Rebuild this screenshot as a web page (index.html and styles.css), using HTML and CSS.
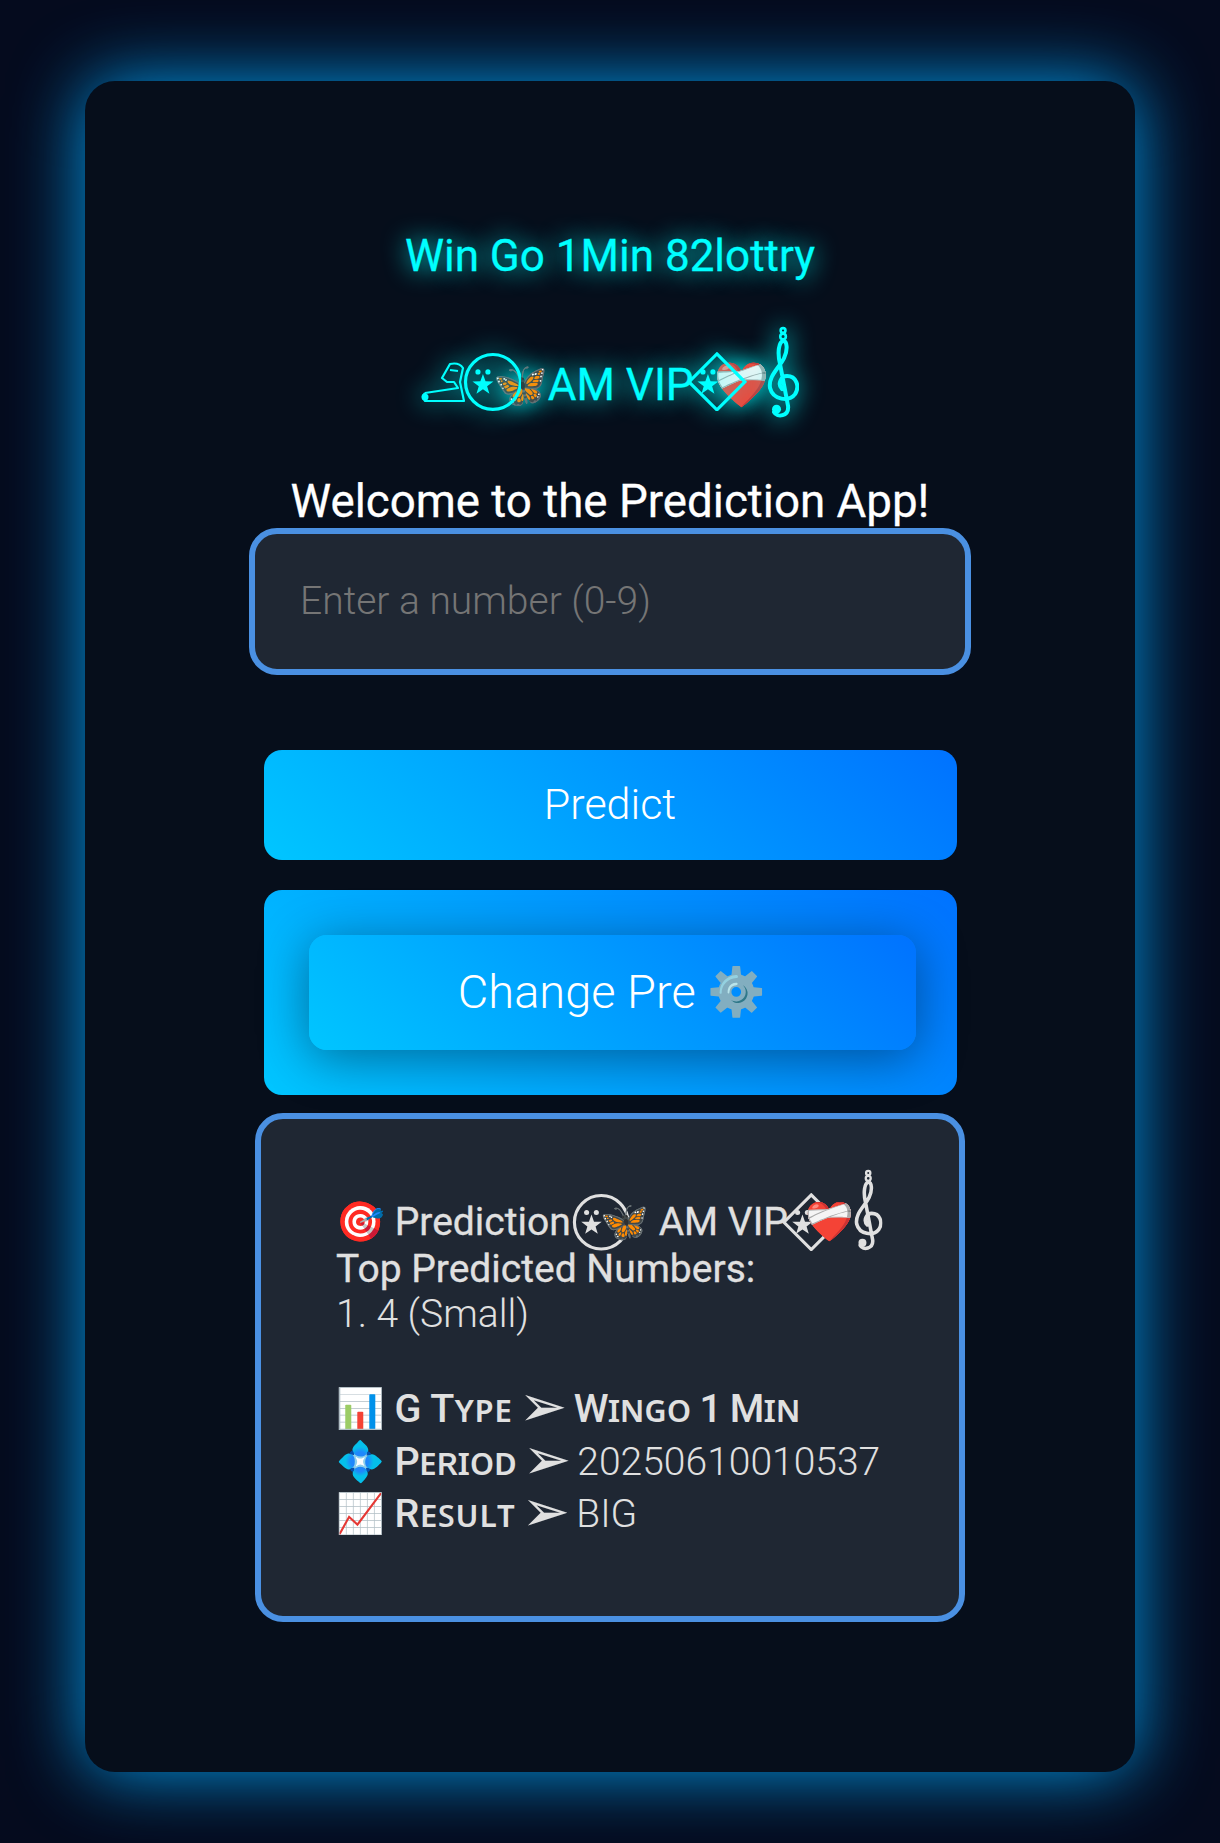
FILE: index.html
```html
<!DOCTYPE html>
<html>
<head>
  <title>Win Go Prediction</title>
  <link rel="stylesheet" href="styles.css">
</head>
<body>
  <svg class="defs" xmlns="http://www.w3.org/2000/svg">
    <symbol id="star-dots" viewBox="0 0 60 60">
      <polygon fill="currentColor" points="21,22 23.6,29.4 31.5,29.6 25.2,34.4 27.5,41.9 21,37.4 14.5,41.9 16.8,34.4 10.5,29.6 18.4,29.4"/>
      <circle fill="currentColor" cx="16" cy="20" r="2.6"/>
      <circle fill="currentColor" cx="26" cy="20" r="2.6"/>
    </symbol>
    <symbol id="clef" viewBox="0 0 32 94">
      <g fill="none" stroke="currentColor" stroke-width="4" stroke-linecap="round">
        <circle cx="16" cy="4.5" r="2.4" stroke-width="2.6"/>
        <circle cx="16" cy="10.5" r="2.8" stroke-width="2.6"/>
        <path d="M15 63C10 58 14 50 20 50C29 50 33 60 28 68C22 76 6 74 3 62C1 50 12 42 17 32C21 24 20 14 16 15C12 16 10 26 13 38L21 80C22 90 10 92 7 86"/>
      </g>
      <circle fill="currentColor" cx="9.5" cy="83" r="4.5"/>
    </symbol>
  </svg>

  <div class="card">
    <h1 class="title">Win Go 1Min 82lottry</h1>
    <h2 class="brand"><svg class="sphinx" viewBox="0 0 44 44"><path d="M4 32L37 27L33 21L26 21L21 17L29 3Q38 1 42 7L39 21L43 40L4 40Q0 36 4 32M29 9L37 10" fill="none" stroke="currentColor" stroke-width="2.2" stroke-linejoin="round"/><circle cx="4" cy="36" r="3.5" fill="currentColor"/></svg><svg class="ring" viewBox="0 0 60 60"><circle cx="31" cy="30" r="27.5" fill="none" stroke="currentColor" stroke-width="3.2"/><use href="#star-dots" width="60" height="60"/></svg>🦋AM VIP<svg class="gem" viewBox="0 0 60 60"><polygon points="30,2 58,30 30,58 2,30" fill="none" stroke="currentColor" stroke-width="3.2"/><use href="#star-dots" width="60" height="60"/></svg>❤️‍🩹<svg class="clef"><use href="#clef"/></svg></h2>
    <h3 class="welcome">Welcome to the Prediction App!</h3>
    <input type="text" class="number-input" placeholder="Enter a number (0-9)" />
    <button class="btn predict-btn">Predict</button>
    <div class="change-wrap">
      <button class="btn change-btn">Change Pre ⚙️</button>
    </div>
    <div class="result">
      <p class="result-head">🎯 Prediction<svg class="ring" viewBox="0 0 60 60"><circle cx="31" cy="30" r="27.5" fill="none" stroke="currentColor" stroke-width="3.2"/><use href="#star-dots" width="60" height="60"/></svg>🦋 AM VIP<svg class="gem" viewBox="0 0 60 60"><polygon points="30,2 58,30 30,58 2,30" fill="none" stroke="currentColor" stroke-width="3.2"/><use href="#star-dots" width="60" height="60"/></svg>❤️‍🩹<svg class="clef"><use href="#clef"/></svg></p>
      <p class="result-sub">Top Predicted Numbers:</p>
      <p class="result-num">1. 4 (Small)</p>
      <div class="meta">
        <p>📊 <b>G Tʏᴘᴇ <span class="arrow">➢</span> <span class="value">Wɪɴɢᴏ 1 Mɪɴ</span></b></p>
        <p>💠 <b><span class="period">Pᴇʀɪᴏᴅ</span> <span class="arrow">➢</span></b> 20250610010537</p>
        <p>📈 <b>Rᴇꜱᴜʟᴛ <span class="arrow">➢</span></b> BIG</p>
      </div>
    </div>
  </div>
</body>
</html>
```

FILE: styles.css
```css
html, body {
  margin: 0;
  padding: 0;
}
body {
  width: 1220px;
  height: 1843px;
  box-sizing: border-box;
  padding: 81px 85px 71px;
  background: #050b1e;
  font-family: Roboto, "Noto Sans", "DejaVu Sans", sans-serif;
  overflow: hidden;
}
.defs {
  display: none;
}
.card {
  height: 1691px;
  box-sizing: border-box;
  padding-top: 150px;
  background: #060e1b;
  border-radius: 30px;
  box-shadow: 0 0 72px rgba(0, 170, 255, 0.9);
  display: flex;
  flex-direction: column;
  align-items: center;
}
.title {
  margin: 0;
  font-size: 44px;
  font-weight: 400;
  -webkit-text-stroke: 0.3px;
  line-height: 51px;
  color: #00ffff;
  text-shadow: 0 0 25px #00ffff;
}
.brand {
  margin: 44px 0 0;
  font-size: 44px;
  font-weight: 400;
  -webkit-text-stroke: 0.3px;
  line-height: 100px;
  white-space: nowrap;
  color: #00ffff;
  text-shadow: 0 0 25px #00ffff;
}
.brand svg {
  filter: drop-shadow(0 0 12px #00ffff);
}
.sphinx {
  width: 44px;
  height: 44px;
  margin-right: -3px;
  vertical-align: -5px;
}
.ring {
  width: 1.36em;
  height: 1.36em;
  margin-right: -0.65em;
  vertical-align: -0.25em;
}
.gem {
  width: 1.36em;
  height: 1.36em;
  margin-left: -0.14em;
  margin-right: -0.75em;
  vertical-align: -0.25em;
}
.clef {
  width: 0.73em;
  height: 2.14em;
  margin-left: -2px;
  vertical-align: -0.45em;
}
.welcome {
  margin: 40px 0 0;
  font-size: 45.7px;
  font-weight: 400;
  -webkit-text-stroke: 0.3px;
  line-height: 53px;
  color: #fff;
}
.number-input {
  width: 722px;
  height: 147px;
  box-sizing: border-box;
  padding: 0 45px 2px;
  background: #1f2733;
  border: 6px solid #4a90e2;
  border-radius: 28px;
  font-family: Roboto, sans-serif;
  font-size: 39px;
  font-weight: 300;
  color: #fff;
  outline: none;
}
.number-input::placeholder {
  color: #757575;
}
.btn {
  padding: 0 0 2px;
  border: none;
  border-radius: 18px;
  background: linear-gradient(45deg, #00c6ff, #0072ff);
  color: #fff;
  font-family: Roboto, sans-serif;
  font-weight: 300;
}
.predict-btn {
  width: 693px;
  height: 110px;
  margin-top: 75px;
  font-size: 43px;
}
.change-wrap {
  width: 693px;
  height: 205px;
  box-sizing: border-box;
  margin-top: 30px;
  padding: 45px;
  border-radius: 18px;
  background: linear-gradient(45deg, #00c6ff, #0072ff);
}
.change-btn {
  display: block;
  width: 607px;
  height: 115px;
  font-size: 47px;
  box-shadow: 0 8px 50px rgba(0, 0, 0, 0.4);
}
.result {
  width: 710px;
  height: 509px;
  box-sizing: border-box;
  margin-top: 18px;
  padding: 50px 60px 0 75px;
  background: #1f2733;
  border: 6px solid #4a90e2;
  border-radius: 28px;
  color: #e0e0e0;
  font-size: 39px;
}
.result p {
  margin: 0;
}
.result-head, .result-sub {
  font-weight: 400;
  -webkit-text-stroke: 0.3px;
  white-space: nowrap;
}
.result-head {
  height: 78px;
  line-height: 47px;
}
.result-sub {
  line-height: 45px;
}
.result-head .ring {
  width: 1.5em;
  height: 1.5em;
  margin-left: 0;
  margin-right: -0.75em;
  vertical-align: -0.42em;
}
.result-head .gem {
  width: 1.5em;
  height: 1.5em;
  margin-right: -0.92em;
  vertical-align: -0.42em;
}
.result-head .clef {
  margin-left: 0;
  vertical-align: -0.46em;
}
.result-num {
  font-weight: 300;
  line-height: 45px;
}
.meta {
  margin-top: 46px;
  font-weight: 300;
  line-height: 52.5px;
}
.meta p {
  white-space: nowrap;
}
.meta b {
  font-size: 39.5px;
  font-weight: 500;
}
.value {
  letter-spacing: -1px;
}
.period {
  letter-spacing: -1px;
}
.arrow {
  margin: 0 -3.5px;
  font-family: "DejaVu Sans", sans-serif;
  font-size: 58px;
  font-weight: 400;
  line-height: 0;
  vertical-align: -4px;
}
```
